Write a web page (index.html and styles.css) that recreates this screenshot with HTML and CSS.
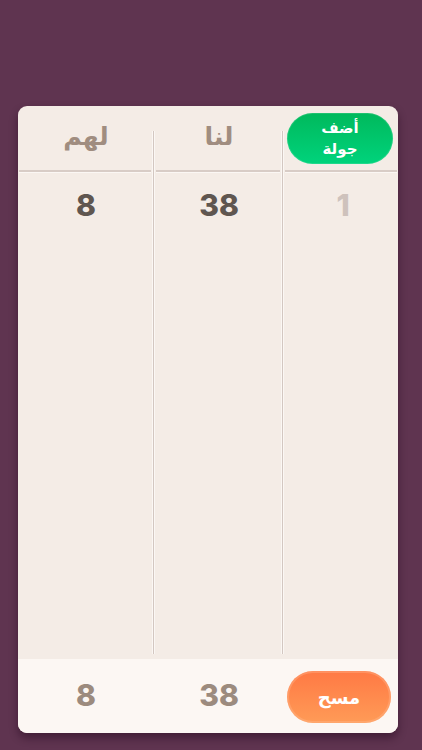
FILE: index.html
```html
<!DOCTYPE html>
<html lang="ar">
<head>
<meta charset="utf-8">
<title>Score</title>
<link rel="stylesheet" href="styles.css">
</head>
<body>
<div class="card">
  <div class="table">
    <div class="col col-them">
      <div class="head"><span class="title">لهم</span></div>
      <div class="sep"></div>
      <div class="cells"><div class="num">8</div></div>
    </div>
    <div class="divider"></div>
    <div class="col col-us">
      <div class="head"><span class="title">لنا</span></div>
      <div class="sep"></div>
      <div class="cells"><div class="num">38</div></div>
    </div>
    <div class="divider"></div>
    <div class="col col-round">
      <div class="head"><button class="btn btn-add">أضف<br>جولة</button></div>
      <div class="sep"></div>
      <div class="cells"><div class="num num-round">1</div></div>
    </div>
  </div>
  <div class="footer">
    <div class="fcol col-them"><span class="total">8</span></div>
    <div class="fgap"></div>
    <div class="fcol col-us"><span class="total">38</span></div>
    <div class="fgap"></div>
    <div class="fcol col-round"><button class="btn btn-clear">مسح</button></div>
  </div>
</div>
</body>
</html>
```

FILE: styles.css
```css
html, body {
  margin: 0;
  padding: 0;
}
body {
  background: #5f3450;
  width: 422px;
  height: 750px;
  font-family: Inter, "DejaVu Sans", sans-serif;
}
.card {
  margin: 106px 0 0 18px;
  width: 380px;
  height: 627px;
  border-radius: 9px;
  overflow: hidden;
  background: #f4ece6;
  box-shadow: 0 5px 8px rgba(30, 5, 25, 0.45);
  display: flex;
  flex-direction: column;
}
.table {
  height: 553px;
  display: flex;
}
.col-them { width: 134px; }
.col-us { width: 126px; }
.col-round { width: 114px; }
.col {
  display: flex;
  flex-direction: column;
}
.divider {
  width: 3px;
  margin: 25px 0 5px 0;
  background: linear-gradient(to right, #fbf7f4 0, #fbf7f4 1px, #d3c7c1 1px, #d3c7c1 2px, #fbf7f4 2px);
}
.head {
  height: 64px;
  display: flex;
  align-items: center;
  justify-content: center;
}
.title {
  font-family: "DejaVu Sans", sans-serif;
  font-weight: bold;
  font-size: 25px;
  color: #a08d80;
  margin: -4px 0 0 2px;
}
.sep {
  height: 3px;
  margin: 0 1px;
  background: linear-gradient(to bottom, #d8ccc6 0, #d8ccc6 2px, #fbf7f4 2px);
}
.cells {
  flex: 1;
  display: flex;
  flex-direction: column;
  align-items: center;
  padding-top: 12px;
}
.num {
  font-weight: 800;
  font-size: 30px;
  line-height: 40px;
  color: #5f5650;
  margin-left: 2px;
}
.num-round {
  color: #cec2bc;
  margin-left: 4px;
}
.btn {
  border: none;
  color: #ffffff;
  font-family: "DejaVu Sans", sans-serif;
  cursor: pointer;
  padding: 0;
}
.btn-add {
  width: 106px;
  height: 51px;
  margin: 1px 0 0 -2px;
  border-radius: 26px;
  background: linear-gradient(to bottom, #00b95c, #00d37c);
  box-shadow: inset 0 0 0 1px rgba(255, 255, 255, 0.12);
  font-size: 15px;
  line-height: 21px;
  font-weight: bold;
}
.footer {
  flex: 1;
  background: #fcf7f3;
  display: flex;
}
.fcol {
  display: flex;
  align-items: center;
  justify-content: center;
}
.fgap { width: 3px; }
.total {
  font-weight: 800;
  font-size: 30px;
  color: #9c8b7e;
  margin: 0 0 2px 2px;
}
.btn-clear {
  width: 104px;
  height: 52px;
  margin: 2px 0 0 -4px;
  border-radius: 26px;
  background: linear-gradient(to bottom, #ff7944, #ff9b57);
  box-shadow: inset 0 0 0 2px rgba(255, 190, 150, 0.35);
  font-size: 18px;
  font-weight: bold;
}
```
